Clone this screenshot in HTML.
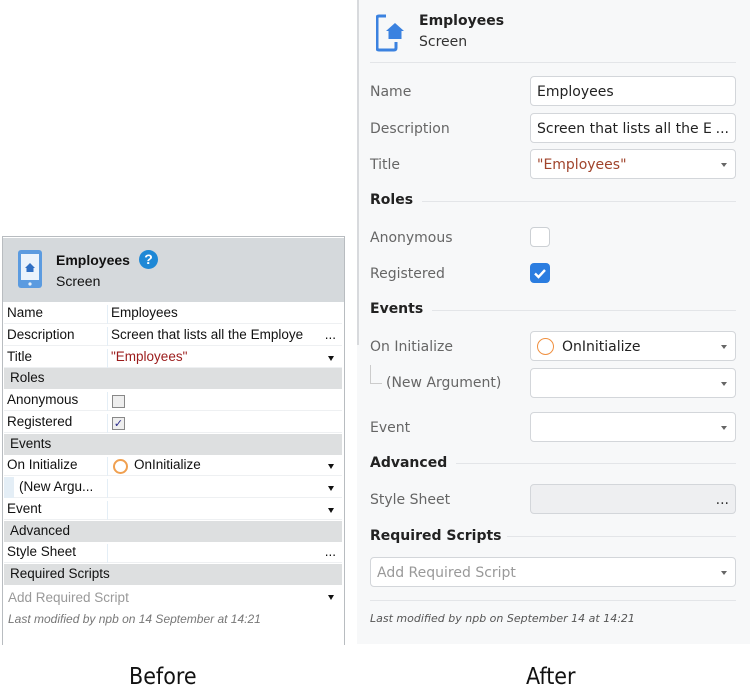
<!DOCTYPE html>
<html><head><meta charset="utf-8"><style>
*{margin:0;padding:0;box-sizing:border-box}
body{width:750px;height:695px;background:#fff;position:relative;overflow:hidden;font-family:"DejaVu Sans","Liberation Sans",sans-serif}
.a{position:absolute;white-space:nowrap}
.L{font-family:"Liberation Sans",sans-serif;font-size:13.5px;color:#111}
.row{position:absolute;left:4px;width:338px;height:21px;border-bottom:1px solid #eef0f2}
.row .k{position:absolute;left:3px;top:2px}
.row .v{position:absolute;left:103px;top:2px;right:0;height:19px;border-left:1px solid #e4eef6;padding-left:3px}
.sec{position:absolute;left:4px;width:338px;height:21px;background:#dddfe0}
.sec span{position:absolute;left:6px;top:2px}
.arr{position:absolute;right:8px;top:7px;width:0;height:0;border-left:3.5px solid transparent;border-right:3.5px solid transparent;border-top:5px solid #111}
.R{font-size:14px;color:#666}
.inp{position:absolute;left:530px;width:206px;height:30px;border:1px solid #d3d6da;border-radius:4px;background:#fff;font-size:14px;color:#222;padding:7px 6px}
.ra{position:absolute;right:8px;top:13px;width:0;height:0;border-left:3.5px solid transparent;border-right:3.5px solid transparent;border-top:4px solid #666}
.hd{position:absolute;left:370px;font-size:14px;font-weight:bold;color:#222}
.hl{position:absolute;height:1px;background:#e3e5e8;right:14px}
</style></head><body>
<!-- LEFT -->
<div class="a" style="left:2px;top:236px;width:343px;height:409px;border:1px solid #b8bcc0;border-bottom:none;background:#fff"></div>
<div class="a" style="left:3px;top:238px;width:341px;height:64px;background:#d5d9dc"></div>
<svg class="a" style="left:18px;top:250px" width="24" height="38" viewBox="0 0 24 38"><rect x="0" y="0" width="24" height="38" rx="3" fill="#5b9be0"/><rect x="3" y="4" width="18" height="26" fill="#eaf3fc"/><circle cx="12" cy="34" r="1.6" fill="#eaf3fc"/><path d="M7 18 L12 13 L17 18 L15.5 18 L15.5 22 L8.5 22 L8.5 18Z" fill="#2f6fc4"/></svg>
<div class="a L" style="left:56px;top:252px;font-weight:bold;font-size:14px">Employees</div>
<div class="a L" style="left:56px;top:273px;font-size:14px">Screen</div>
<div class="a" style="left:139px;top:250px;width:19px;height:19px;border-radius:50%;background:#1e88d6;color:#fff;font:bold 14px 'Liberation Sans',sans-serif;text-align:center;line-height:19px">?</div>

<div class="row L" style="top:303px"><span class="k">Name</span><span class="v">Employees</span></div>
<div class="row L" style="top:325px"><span class="k">Description</span><span class="v">Screen that lists all the Employe <b style="font-weight:normal;position:absolute;right:6px">...</b></span></div>
<div class="row L" style="top:346.5px"><span class="k">Title</span><span class="v" style="color:#9b1b1b">"Employees"<i class="arr"></i></span></div>
<div class="sec L" style="top:368px"><span>Roles</span></div>
<div class="row L" style="top:390px"><span class="k">Anonymous</span><span class="v"><i class="a" style="left:4px;top:3px;width:13px;height:13px;border:1px solid #888;background:#eee"></i></span></div>
<div class="row L" style="top:412px"><span class="k">Registered</span><span class="v"><i class="a" style="left:4px;top:3px;width:13px;height:13px;border:1px solid #888;background:#eee;font-style:normal;font-size:11px;line-height:12px;text-align:center;color:#2a2a8a">✓</i></span></div>
<div class="sec L" style="top:433.5px"><span>Events</span></div>
<div class="row L" style="top:455px"><span class="k">On Initialize</span><span class="v"><i class="a" style="left:5px;top:2px;width:15px;height:15px;border:2px solid #f0a050;border-radius:50%"></i><span style="margin-left:23px">OnInitialize</span><i class="arr"></i></span></div>
<div class="row L" style="top:477px"><i class="a" style="left:0;top:0;width:10px;height:21px;background:#e4eef6"></i><span class="k" style="left:15px">(New Argu...</span><span class="v"><i class="arr"></i></span></div>
<div class="row L" style="top:499px"><span class="k">Event</span><span class="v"><i class="arr"></i></span></div>
<div class="sec L" style="top:520.5px"><span>Advanced</span></div>
<div class="row L" style="top:542px"><span class="k">Style Sheet</span><span class="v"><b style="font-weight:normal;position:absolute;right:6px">...</b></span></div>
<div class="sec L" style="top:564px"><span>Required Scripts</span></div>
<div class="row L" style="top:588px;color:#999;border:none"><span class="k" style="left:4px">Add Required Script</span><i class="arr"></i></div>
<div class="a L" style="left:8px;top:612px;font-size:12px;font-style:italic;color:#777">Last modified by npb on 14 September at 14:21</div>

<!-- RIGHT -->
<div class="a" style="left:357px;top:0;width:393px;height:644px;background:#f7f8f9"></div>
<div class="a" style="left:357px;top:0;width:2px;height:345px;background:#d8dadd"></div>
<svg class="a" style="left:376px;top:14px" width="30" height="38" viewBox="0 0 30 38"><path d="M10 2 H3 Q1 2 1 4 V34 Q1 36 3 36 H18 Q20 36 20 34 V28" fill="none" stroke="#3b82e0" stroke-width="3"/><path d="M10 17 L19 9 L28 17 L25.5 17 L25.5 25 L12.5 25 L12.5 17Z" fill="#3b82e0"/></svg>
<div class="a" style="left:419px;top:13px;font-size:14px;font-weight:bold;color:#222">Employees</div>
<div class="a" style="left:419px;top:34px;font-size:14px;color:#333">Screen</div>
<div class="hl" style="left:370px;top:62px;width:366px"></div>

<div class="a R" style="left:370px;top:84px">Name</div>
<div class="inp" style="top:76px">Employees</div>
<div class="a R" style="left:370px;top:121px">Description</div>
<div class="inp" style="top:113px">Screen that lists all the E<span style="position:absolute;right:6px">...</span></div>
<div class="a R" style="left:370px;top:157px">Title</div>
<div class="inp" style="top:149px;color:#a0442c">"Employees"<i class="ra"></i></div>
<div class="hd" style="top:192px">Roles</div><div class="hl" style="left:422px;top:201px"></div>
<div class="a R" style="left:370px;top:230px">Anonymous</div>
<div class="a" style="left:530px;top:227px;width:20px;height:20px;border:1px solid #ccd0d4;border-radius:4px;background:#fff"></div>
<div class="a R" style="left:370px;top:266px">Registered</div>
<svg class="a" style="left:530px;top:263px" width="20" height="20"><rect width="20" height="20" rx="4" fill="#2b7de0"/><path d="M5 10.5 L8.5 14 L15 7" fill="none" stroke="#fff" stroke-width="2.4"/></svg>
<div class="hd" style="top:301px">Events</div><div class="hl" style="left:432px;top:310px"></div>
<div class="a R" style="left:370px;top:339px">On Initialize</div>
<div class="inp" style="top:331px"><i class="a" style="left:6px;top:6px;width:17px;height:17px;border:1.5px solid #f09040;border-radius:50%"></i><span style="margin-left:25px">OnInitialize</span><i class="ra"></i></div>
<div class="a" style="left:370px;top:365px;width:1px;height:18px;background:#ccc"></div>
<div class="a" style="left:370px;top:383px;width:12px;height:1px;background:#ccc"></div>
<div class="a R" style="left:386px;top:375px">(New Argument)</div>
<div class="inp" style="top:368px"><i class="ra"></i></div>
<div class="a R" style="left:370px;top:420px">Event</div>
<div class="inp" style="top:412px"><i class="ra"></i></div>
<div class="hd" style="top:455px">Advanced</div><div class="hl" style="left:456px;top:463px"></div>
<div class="a R" style="left:370px;top:492px">Style Sheet</div>
<div class="inp" style="top:484px;background:#eeeff1"><span style="position:absolute;right:6px;color:#333">...</span></div>
<div class="hd" style="top:528px">Required Scripts</div><div class="hl" style="left:507px;top:536px"></div>
<div class="inp" style="left:370px;width:366px;top:557px;color:#999">Add Required Script<i class="ra"></i></div>
<div class="hl" style="left:370px;top:600px;width:366px"></div>
<div class="a" style="left:370px;top:612px;font-size:11px;font-style:italic;color:#555">Last modified by npb on September 14 at 14:21</div>

<div class="a" style="left:129px;top:664px;font-size:23px;color:#111;font-family:'DejaVu Sans Condensed','DejaVu Sans',sans-serif">Before</div>
<div class="a" style="left:526px;top:664px;font-size:23px;color:#111;font-family:'DejaVu Sans Condensed','DejaVu Sans',sans-serif">After</div>
</body></html>
